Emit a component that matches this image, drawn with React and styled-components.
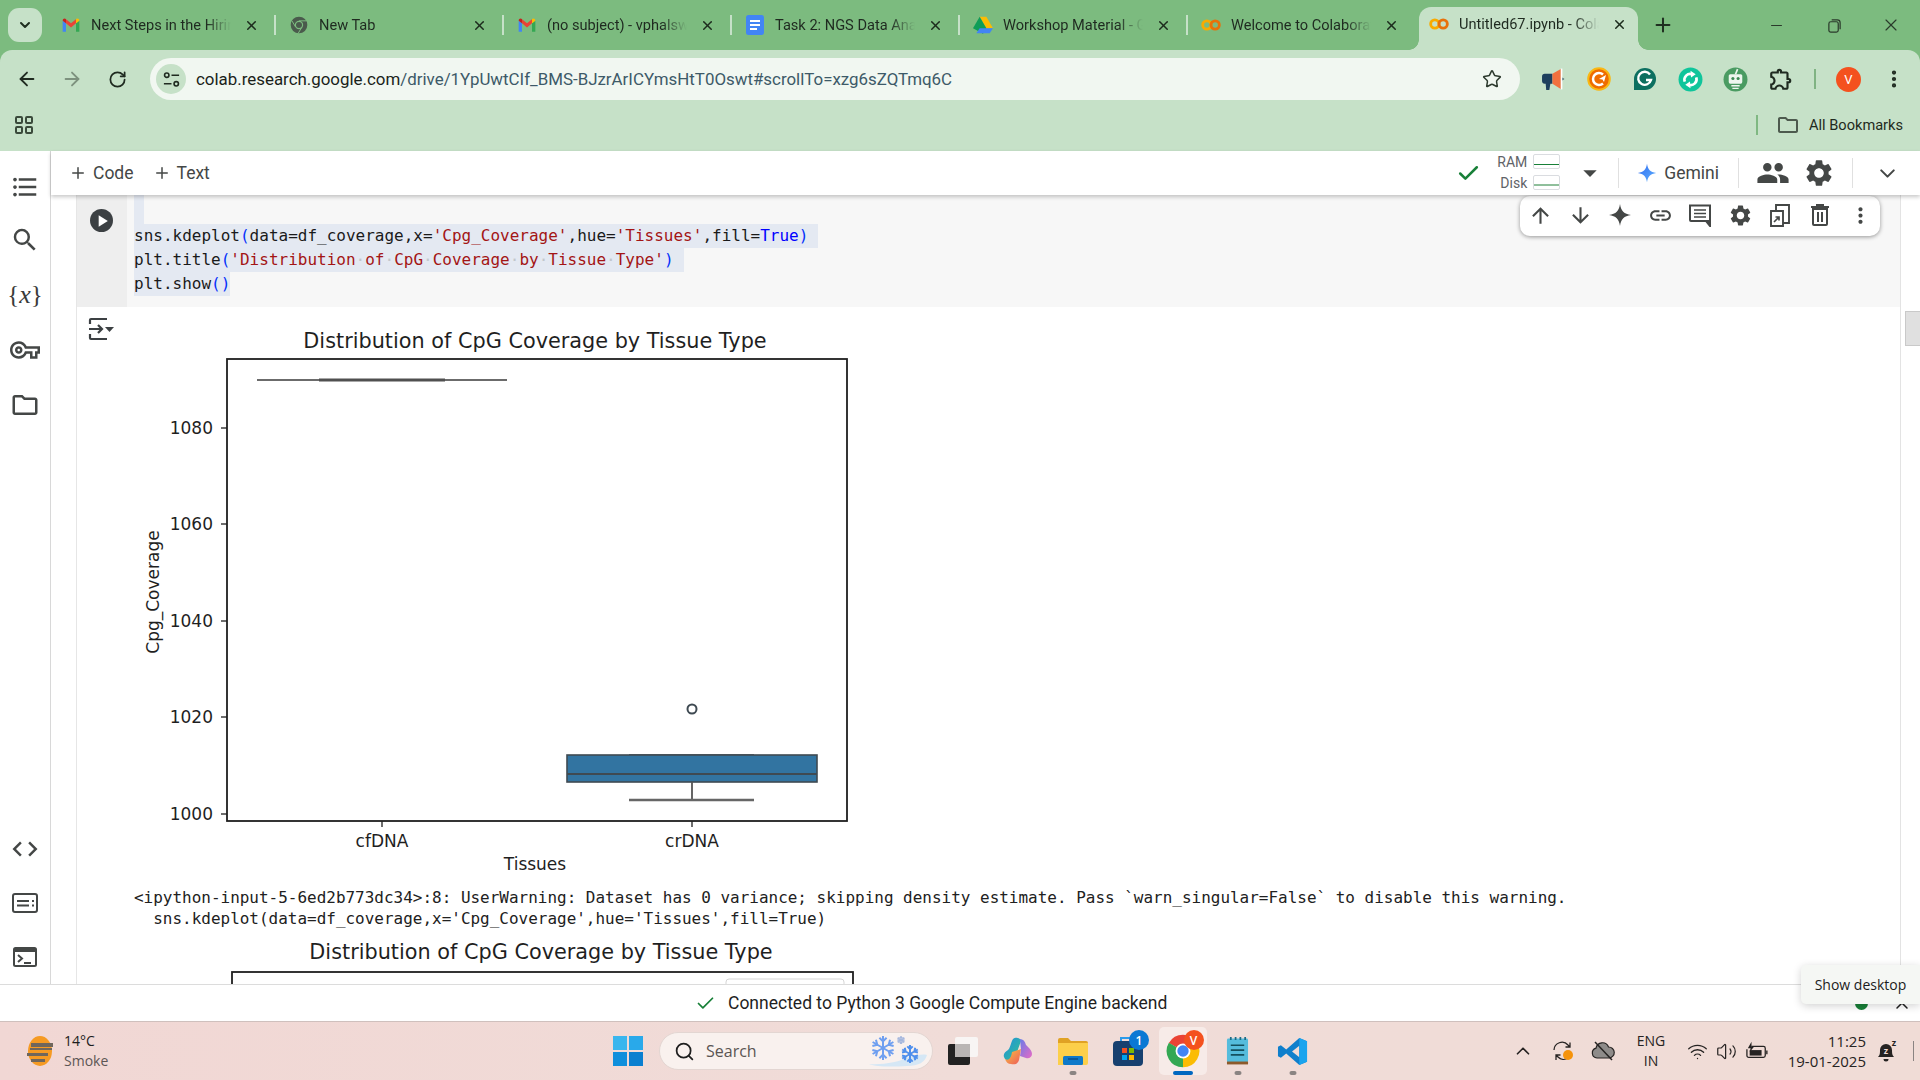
import React from 'react';
import styled, { createGlobalStyle } from 'styled-components';
import { ArrowLeft, ArrowRight, RotateCw, Star, Plus, X, Minus, ChevronDown, ChevronUp, Search, Check, MoreVertical, Wifi, Volume2 } from 'lucide-react';
import {
  MdFormatListBulleted, MdSearch, MdOutlineVpnKey, MdOutlineFolder, MdCode, MdPeople, MdSettings,
  MdArrowUpward, MdArrowDownward, MdLink, MdMoreVert, MdPlayArrow, MdArrowDropDown, MdOutlineExtension,
} from 'react-icons/md';

const UI_FONT = `Roboto, "Liberation Sans", sans-serif`;
const TAB_GREEN = '#7cbb7f';
const BAR_GREEN = '#c6e1c8';

const GlobalStyle = createGlobalStyle`
  html, body { margin: 0; padding: 0; width: 1920px; height: 1080px; overflow: hidden; background: #fff; }
  * { box-sizing: border-box; }
  body { font-family: ${UI_FONT}; color: #1f1f1f; }
`;

const Page = styled.div`
  position: relative;
  width: 1920px;
  height: 1080px;
  display: flex;
  flex-direction: column;
  overflow: hidden;
`;

/* ---- browser chrome ---- */
const Chrome = styled.div`
  background: ${TAB_GREEN};
  flex: none;
`;

const TabStrip = styled.div`
  height: 50px;
  display: flex;
  align-items: flex-end;
  padding-left: 8px;
`;

const TabSearch = styled.div`
  width: 34px;
  height: 34px;
  margin: 0 5px 8px 0;
  border-radius: 11px;
  background: ${BAR_GREEN};
  display: flex;
  align-items: center;
  justify-content: center;
  color: #1f2f20;
`;

const TabItem = styled.div`
  position: relative;
  width: 228px;
  height: 42px;
  padding: 0 16px 8px 14px;
  display: flex;
  align-items: center;
  gap: 10px;
  color: #1f2a20;
  ${(p) => (p.$active ? 'height: 43px; padding-bottom: 9px;' : '')}
`;

const ActiveBack = styled.div`
  position: absolute;
  left: 4px;
  right: 5px;
  top: 0;
  bottom: 0;
  background: ${BAR_GREEN};
  border-radius: 12px 12px 0 0;
`;

const TabFoot = styled.div`
  position: absolute;
  bottom: 0;
  width: 10px;
  height: 10px;
  ${(p) => (p.$side === 'left' ? 'left: -6px;' : 'right: -5px;')}
  background: radial-gradient(circle at ${(p) => (p.$side === 'left' ? '0 0' : '100% 0')}, transparent 9.5px, ${BAR_GREEN} 10px);
`;

const TabSep = styled.div`
  position: absolute;
  right: -1px;
  top: 7px;
  width: 2px;
  height: 20px;
  background: ${BAR_GREEN};
`;

const TabIcon = styled.div`
  position: relative;
  flex: none;
  width: 20px;
  height: 20px;
  display: flex;
`;

const TabTitle = styled.div`
  position: relative;
  flex: 1;
  min-width: 0;
  margin-right: 2px;
  font-size: 14.6px;
  white-space: nowrap;
  overflow: hidden;
  -webkit-mask-image: linear-gradient(90deg, #000 82%, transparent 100%);
  mask-image: linear-gradient(90deg, #000 82%, transparent 100%);
`;

const TabClose = styled.div`
  position: relative;
  flex: none;
  width: 16px;
  height: 16px;
  display: flex;
  align-items: center;
  justify-content: center;
  color: #1c2b1d;
`;

const NewTab = styled.div`
  width: 40px;
  height: 34px;
  margin: 0 0 8px 0;
  display: flex;
  align-items: center;
  justify-content: center;
  color: #1f2f20;
`;

const WinControls = styled.div`
  margin-left: auto;
  display: flex;
  align-self: flex-start;
`;

const WinButton = styled.div`
  width: 57.3px;
  height: 50px;
  display: flex;
  align-items: center;
  justify-content: center;
  color: #2a3a2b;
`;

const Toolbar = styled.div`
  height: 58px;
  padding: 8px 0 8px 4px;
  background: ${BAR_GREEN};
  border-radius: 12px 12px 0 0;
  display: flex;
  align-items: center;
`;

const NavButton = styled.div`
  width: 45.5px;
  height: 42px;
  flex: none;
  display: flex;
  align-items: center;
  justify-content: center;
  color: ${(p) => (p.$disabled ? '#7d917e' : '#1f2a20')};
`;

const Omnibox = styled.div`
  width: 1370px;
  height: 42px;
  margin: 0 11px 0 9.5px;
  padding: 0 18px 0 6px;
  flex: none;
  border-radius: 21px;
  background: #f1f7f1;
  display: flex;
  align-items: center;
  gap: 10px;
`;

const SiteChip = styled.div`
  width: 30px;
  height: 30px;
  flex: none;
  border-radius: 50%;
  background: ${BAR_GREEN};
  display: flex;
  align-items: center;
  justify-content: center;
  color: #1f2a20;
`;

const UrlText = styled.div`
  flex: 1;
  font-size: 16.9px;
  color: #3d5a68;
  white-space: nowrap;
  b { font-weight: 400; color: #1a1f1a; }
`;

const ExtSlot = styled.div`
  width: 45.5px;
  height: 32px;
  flex: none;
  display: flex;
  align-items: center;
  justify-content: center;
`;

const ToolSep = styled.div`
  width: 2px;
  height: 20px;
  margin: 0 ${(p) => p.$gap || 10}px;
  background: #80b383;
  flex: none;
`;

const Avatar = styled.div`
  width: 25px;
  height: 25px;
  margin: 0 10px 0 10px;
  flex: none;
  border-radius: 50%;
  background: #f4511e;
  color: #fff;
  font-size: 13px;
  display: flex;
  align-items: center;
  justify-content: center;
`;

const BookmarkBar = styled.div`
  height: 43px;
  padding: 0 17px 9px 14px;
  background: ${BAR_GREEN};
  display: flex;
  align-items: center;
  color: #1f2a20;
  font-size: 14.6px;
`;

const BookmarkEnd = styled.div`
  margin-left: auto;
  display: flex;
  align-items: center;
  gap: 9px;
`;

const BookmarkDivider = styled.div`
  width: 2px;
  height: 20px;
  margin-right: 9px;
  background: #7fb882;
`;

/* ---- colab ---- */
const Workspace = styled.div`
  height: 833px;
  flex: none;
  display: flex;
`;

const Sidebar = styled.div`
  width: 51px;
  flex: none;
  padding-top: 9.5px;
  border-right: 1px solid #d8d8d8;
  display: flex;
  flex-direction: column;
  align-items: center;
  color: #444746;
  background: #fff;
`;

const SideIcon = styled.div`
  width: 30px;
  height: ${(p) => p.$h || 55}px;
  display: flex;
  align-items: center;
  justify-content: center;
  font-size: 30px;
  ${(p) => (p.$push ? 'margin-top: auto;' : '')}
`;

const VarGlyph = styled.span`
  font-family: "Liberation Serif", serif;
  font-size: 25px;
  white-space: nowrap;
  color: #3a3a3a;
  i { font-size: 26px; }
`;

const Main = styled.div`
  flex: 1;
  min-width: 0;
  display: flex;
  flex-direction: column;
`;

const ColabBar = styled.div`
  position: relative;
  z-index: 2;
  height: 44px;
  flex: none;
  padding: 0 20px 0 18px;
  background: #fff;
  box-shadow: 0 2px 4px rgba(0, 0, 0, 0.22);
  display: flex;
  align-items: center;
  color: #444746;
`;

const AddButton = styled.div`
  display: flex;
  align-items: center;
  gap: 6px;
  margin-right: 19px;
  font-size: 17.5px;
`;

const BarRight = styled.div`
  margin-left: auto;
  display: flex;
  align-items: center;
`;

const Meters = styled.div`
  margin: -2px 0 0 16px;
  display: grid;
  grid-template-columns: auto 27px;
  column-gap: 6px;
  row-gap: 5px;
  align-items: center;
  justify-items: end;
  font-size: 14px;
  color: #5f6368;
`;

const Meter = styled.div`
  width: 27px;
  height: 15px;
  border: 1px solid #dadce0;
  border-radius: 2px;
  background: #fff;
  display: flex;
  flex-direction: column;
  justify-content: flex-end;
  &::after {
    content: '';
    height: ${(p) => p.$level}px;
    background: ${(p) => p.$color};
    margin-bottom: 3px;
  }
`;

const BarSep = styled.div`
  width: 1px;
  height: 30px;
  background: #e0e0e0;
  margin: ${(p) => p.$m || '0 18px'};
`;

const GeminiLabel = styled.div`
  display: flex;
  align-items: center;
  gap: 7px;
  font-size: 17.5px;
`;

const Notebook = styled.div`
  position: relative;
  flex: 1;
  min-height: 0;
  display: flex;
  overflow: hidden;
  background: #fff;
`;

const LeftGutter = styled.div`
  width: 26px;
  flex: none;
  border-right: 1px solid #e6e6e6;
`;

const CellColumn = styled.div`
  flex: 1;
  min-width: 0;
`;

const Cell = styled.div`
  height: 112px;
  display: flex;
`;

const RunGutter = styled.div`
  width: 50px;
  flex: none;
  padding: 14px 0 0 13px;
  background: #eeeeee;
`;

const RunButton = styled.div`
  width: 23px;
  height: 23px;
  border-radius: 50%;
  background: #3c4043;
  color: #fff;
  display: flex;
  align-items: center;
  justify-content: center;
`;

const CodeArea = styled.div`
  flex: 1;
  background: #f7f7f7;
  padding-left: 7px;
  font-family: "DejaVu Sans Mono", "Liberation Mono", monospace;
  font-size: 16px;
  line-height: 24px;
  color: #1a1a1a;
`;

const SelectBlank = styled.div`
  width: 10px;
  height: 29px;
  background: #e4e9f2;
`;

const CodeLine = styled.div`
  white-space: pre;
  height: 24px;
`;

const Selected = styled.span`
  display: inline-block;
  height: 24px;
  padding-right: ${(p) => p.$pad || 0}px;
  background: #e4e9f2;
`;

const Str = styled.span` color: #a31515; `;
const Paren = styled.span` color: #0431fa; `;
const Kw = styled.span` color: #0000ff; `;
const Ws = styled.span` color: #c2c7cc; `;

const OutputRow = styled.div`
  display: flex;
`;

const OutputGutter = styled.div`
  width: 50px;
  flex: none;
  padding: 10px 0 0 11px;
  color: #3c4043;
`;

const OutputBody = styled.div`
  flex: 1;
  min-width: 0;
`;

const ChartSvg = styled.svg`
  display: block;
  overflow: hidden;
`;

const Stderr = styled.pre`
  margin: 10px 0 0;
  padding-left: 7px;
  font-family: "DejaVu Sans Mono", "Liberation Mono", monospace;
  font-size: 15.97px;
  line-height: 21px;
  color: #212121;
  height: 44px;
`;

const Scrollbar = styled.div`
  width: 20px;
  flex: none;
  padding: 116px 0 0 4px;
  border-left: 1px solid #e3e3e3;
`;

const ScrollThumb = styled.div`
  height: 35px;
  background: #e0e0e0;
  border: 1px solid #c9c9c9;
  border-right: 0;
`;

const CellToolbar = styled.div`
  position: absolute;
  left: 1469px;
  top: 1px;
  width: 360px;
  height: 40px;
  padding-bottom: 2px;
  border-radius: 10px;
  background: #fff;
  box-shadow: 0 1px 4px rgba(0, 0, 0, 0.4);
  display: flex;
  align-items: center;
  color: #444746;
`;

const CellTool = styled.div`
  width: 40px;
  height: 38px;
  display: flex;
  align-items: center;
  justify-content: center;
  font-size: 25px;
`;

const StatusBar = styled.div`
  height: 37px;
  flex: none;
  padding: 0 8px 0 695px;
  border-top: 1px solid #dcdcdc;
  background: #fff;
  display: flex;
  align-items: center;
  font-size: 17.5px;
  color: #1f1f1f;
`;

const StatusText = styled.span`
  margin-left: 12px;
`;

const StatusEnd = styled.div`
  margin-left: auto;
  display: flex;
  align-items: center;
  gap: 24px;
`;

const GreenDot = styled.div`
  width: 13px;
  height: 13px;
  border-radius: 50%;
  background: #188038;
`;

const DesktopTip = styled.div`
  position: absolute;
  left: 1801px;
  top: 965px;
  width: 119px;
  height: 39px;
  z-index: 5;
  border-radius: 5px 0 0 5px;
  background: #f5f7f4;
  box-shadow: 0 2px 8px rgba(0, 0, 0, 0.18);
  font-family: "Open Sans", sans-serif;
  font-size: 14px;
  display: flex;
  align-items: center;
  justify-content: center;
  color: #1c1c1c;
`;

/* ---- windows taskbar ---- */
const Taskbar = styled.div`
  height: 59px;
  flex: none;
  border-top: 1px solid #cfc0bd;
  background: linear-gradient(90deg, #f1d7d4 0%, #f0dcd8 50%, #f0dcd6 100%);
  display: flex;
  align-items: center;
  font-family: "Open Sans", sans-serif;
`;

const Weather = styled.div`
  width: 600px;
  flex: none;
  padding-left: 24px;
  display: flex;
  align-items: center;
  gap: 8px;
`;

const WeatherText = styled.div`
  font-size: 14px;
  line-height: 20px;
  color: #1c1c1c;
  span { display: block; color: #5c5654; }
`;

const TaskSlot = styled.div`
  position: relative;
  width: ${(p) => (p.$active ? 48 : 55)}px;
  height: 48px;
  flex: none;
  ${(p) => (p.$active ? 'margin: 0 3.5px; background: #f7ebe8; border-radius: 5px;' : '')}
  display: flex;
  align-items: center;
  justify-content: center;
`;

const RunDot = styled.div`
  position: absolute;
  bottom: 0;
  left: 50%;
  transform: translateX(-50%);
  height: 4px;
  border-radius: 2px;
  width: ${(p) => (p.$active ? 20 : 7)}px;
  background: ${(p) => (p.$active ? '#0067c0' : '#8a8482')};
`;

const Badge = styled.div`
  position: absolute;
  right: ${(p) => p.$r}px;
  top: ${(p) => p.$t}px;
  width: 20px;
  height: 20px;
  border-radius: 50%;
  background: ${(p) => p.$bg};
  color: #fff;
  font-size: 12px;
  font-weight: 600;
  display: flex;
  align-items: center;
  justify-content: center;
`;

const SearchPill = styled.div`
  width: 274px;
  height: 38px;
  margin: 0 2px 0 4px;
  padding: 0 4px 0 14px;
  flex: none;
  border-radius: 19px;
  background: #f9f1ee;
  border: 1px solid #e3d6d2;
  display: flex;
  align-items: center;
  gap: 11px;
  font-size: 16px;
  color: #5b5553;
`;

const SnowBox = styled.div`
  margin-left: auto;
  display: flex;
`;

const Tray = styled.div`
  margin-left: auto;
  padding-right: 6px;
  display: flex;
  align-items: center;
  color: #262322;
`;

const TrayItem = styled.div`
  width: ${(p) => p.$w}px;
  margin-left: ${(p) => p.$ml || 0}px;
  flex: none;
  display: flex;
  align-items: center;
  justify-content: center;
`;

const TrayText = styled.div`
  flex: none;
  font-size: ${(p) => p.$size || 14}px;
  line-height: 20px;
  text-align: ${(p) => p.$align || 'center'};
  width: ${(p) => p.$w}px;
`;

const TrayDivider = styled.div`
  width: 1px;
  height: 20px;
  margin-left: 7px;
  background: #8a8482;
`;

/* ---- drawn icons ---- */
const GmailIcon = () => (
  <svg viewBox="0 0 24 20" width="20" height="20">
    <path d="M2 18V5l4 3v10z" fill="#4285f4" />
    <path d="M22 18V5l-4 3v10z" fill="#34a853" />
    <path d="M6 8V3l6 5 6-5v5l-6 5z" fill="#ea4335" />
    <path d="M2 5c0-2.5 2.5-3.4 4-2v5z" fill="#c5221f" />
    <path d="M22 5c0-2.5-2.5-3.4-4-2v5z" fill="#fbbc04" />
  </svg>
);

const ChromeMono = () => (
  <svg viewBox="0 0 24 24" width="20" height="20">
    <circle cx="12" cy="12" r="10" fill="#4a5a4c" />
    <circle cx="12" cy="12" r="5" fill={TAB_GREEN} />
    <circle cx="12" cy="12" r="3.6" fill="#4a5a4c" />
    <path d="M12 7h9M8 14.5L3.5 7M15.5 14.5L11 22" stroke={TAB_GREEN} strokeWidth="1.2" />
  </svg>
);

const DocsIcon = () => (
  <svg viewBox="0 0 20 20" width="20" height="20">
    <rect x="1" y="0" width="18" height="20" rx="2.5" fill="#4285f4" />
    <path d="M5 6h10M5 10h10M5 14h7" stroke="#fff" strokeWidth="1.8" />
  </svg>
);

const DriveIcon = () => (
  <svg viewBox="0 0 24 22" width="20" height="20">
    <path d="M8 1h8l8 14h-8z" fill="#fbbc04" />
    <path d="M8 1l8 14-4 6.5L0 15z" fill="#0f9d58" />
    <path d="M4 21l4-6h16l-4 6z" fill="#4285f4" />
  </svg>
);

const ColabIcon = () => (
  <svg viewBox="0 0 24 16" width="21" height="20">
    <circle cx="7" cy="8" r="5" fill="none" stroke="#f9ab00" strokeWidth="3.4" />
    <circle cx="17" cy="8" r="5" fill="none" stroke="#e8710a" strokeWidth="3.4" />
  </svg>
);

const ChromeColor = ({ size = 34 }) => (
  <svg viewBox="0 0 48 48" width={size} height={size}>
    <path d="M10.1 16A16 16 0 0 1 37.9 16" fill="none" stroke="#ea4335" strokeWidth="14" />
    <path d="M37.9 16A16 16 0 0 1 24 40" fill="none" stroke="#fbbc04" strokeWidth="14" />
    <path d="M24 40A16 16 0 0 1 10.1 16" fill="none" stroke="#34a853" strokeWidth="14" />
    <circle cx="24" cy="24" r="10.5" fill="#fff" />
    <circle cx="24" cy="24" r="8" fill="#4285f4" />
  </svg>
);

const SiteTune = () => (
  <svg viewBox="0 0 20 20" width="19" height="19" fill="none" stroke="currentColor" strokeWidth="1.7">
    <circle cx="5" cy="5.500" r="2.300" />
    <path d="M10 5.500h8M2 14.500h8" />
    <circle cx="15" cy="14.500" r="2.300" />
  </svg>
);

const Megaphone = () => (
  <svg viewBox="0 0 24 24" width="25" height="25">
    <path d="M1 9c0-1.500 1-2.500 2.500-2.500H11v9.500H9l-1 6H5l-.5-6H3.500C2 16 1 15 1 13.500z" fill="#1d3f5e" />
    <path d="M11 6.500L19 2v19l-8-5z" fill="#f2703f" />
    <path d="M19 1.500h1.500V21.500H19z" fill="#fff" />
    <path d="M20.500 10l2 1.500-2 1.500z" fill="#4d6a78" />
  </svg>
);

const ReplyExt = () => (
  <svg viewBox="0 0 24 24" width="24" height="24">
    <circle cx="12" cy="12" r="10.800" fill="#ef6c00" stroke="#f9b814" strokeWidth="2" />
    <path d="M16 7.500A6 6 0 1 0 16 16.500" fill="none" stroke="#fff" strokeWidth="2.500" />
    <path d="M12 12l7-4-2 7-1.500-2.500z" fill="#fff" />
  </svg>
);

const GrammarExt = () => (
  <svg viewBox="0 0 24 24" width="24" height="24">
    <path d="M12 1a11 11 0 0 1 0 22H1V12A11 11 0 0 1 12 1z" fill="#0c6f60" />
    <path d="M17 7.500A6.500 6.500 0 1 0 18 13h-5" fill="none" stroke="#fff" strokeWidth="2.400" />
  </svg>
);

const ArrowsExt = () => (
  <svg viewBox="0 0 24 24" width="25" height="25">
    <circle cx="12" cy="12" r="11.500" fill="#0fc59b" />
    <path d="M6.500 14a5.500 5.500 0 0 1 7-7M17.500 10a5.500 5.500 0 0 1-7 7" fill="none" stroke="#fff" strokeWidth="2.600" />
    <path d="M12 3.500l5 3.500-4.500 3zM12 20.500L7 17l4.500-3z" fill="#fff" />
  </svg>
);

const RobotExt = () => (
  <svg viewBox="0 0 24 24" width="25" height="25">
    <circle cx="12" cy="12" r="11.500" fill="#4a9b62" />
    <rect x="5.500" y="7" width="13" height="9" rx="1.500" fill="#eef6ef" />
    <circle cx="9.500" cy="11" r="1.500" fill="#3c8a54" />
    <circle cx="14.500" cy="11" r="1.500" fill="#3c8a54" />
    <path d="M12 7l2-5" stroke="#eef6ef" strokeWidth="1.600" />
    <path d="M8 18h8M9 20.500h6" stroke="#eef6ef" strokeWidth="1.400" />
  </svg>
);

const WinLogo = () => (
  <svg viewBox="0 0 30 30" width="30" height="30">
    <path d="M0 0h14v14H0z" fill="#3ab6ee" />
    <path d="M16 0h14v14H16z" fill="#29a9ea" />
    <path d="M0 16h14v14H0z" fill="#0f8fdc" />
    <path d="M16 16h14v14H16z" fill="#0a7fd0" />
  </svg>
);

const WeatherIcon = () => (
  <svg viewBox="0 0 32 32" width="32" height="32">
    <ellipse cx="16" cy="16" rx="12" ry="15" fill="#f59a23" />
    <path d="M7 8h22v4H7zM3 18h21v3H3zM7 24h14v3H7z" fill="#6f665c" />
    <path d="M6 13h22v2H6z" fill="#6f665c" />
  </svg>
);

const Flake = ({ x, y, r, color, width = 2 }) => (
  <g transform={`translate(${x} ${y})`} stroke={color} strokeWidth={width} fill="none">
    {[0, 60, 120, 180, 240, 300].map((a) => (
      <g key={a} transform={`rotate(${a})`}>
        <path d={`M0 0V${-r}M${-r * 0.3} ${-r * 0.85}L0 ${-r * 0.55}L${r * 0.3} ${-r * 0.85}`} />
      </g>
    ))}
  </g>
);

const SnowArt = () => (
  <svg viewBox="0 0 60 32" width="60" height="32">
    <path d="M1 29c14 1 30-2 40-7 8-2 14-3 18-2-2 7-8 11-20 11-16 1-30 1-38-2z" fill="#d5e7f5" />
    <Flake x={15} y={13} r={12} color="#6f9ff0" />
    <Flake x={42} y={19} r={9} color="#4f8fec" />
    <Flake x={33} y={5} r={4} color="#a5b7dd" width={1.500} />
  </svg>
);

const TaskView = () => (
  <svg viewBox="0 0 30 28" width="30" height="28">
    <rect x="7" y="0" width="23" height="20" rx="2" fill="#f8f5f4" />
    <rect x="0" y="7" width="22" height="21" rx="2" fill="#222" />
    <rect x="7" y="7" width="15" height="13" fill="#b9b5b4" />
  </svg>
);

const Copilot = () => (
  <svg viewBox="0 0 30 28" width="30" height="28">
    <defs>
      <linearGradient id="copA" x1="0" y1="0" x2="1" y2="1">
        <stop offset="0" stopColor="#1f8fe0" />
        <stop offset="1" stopColor="#35c28f" />
      </linearGradient>
      <linearGradient id="copB" x1="0" y1="0" x2="1" y2="1">
        <stop offset="0" stopColor="#6a7be8" />
        <stop offset="1" stopColor="#e66bc5" />
      </linearGradient>
      <linearGradient id="copC" x1="0" y1="0" x2="1" y2="1">
        <stop offset="0" stopColor="#f5c542" />
        <stop offset="1" stopColor="#ef5a5a" />
      </linearGradient>
    </defs>
    <path d="M10 2c2-2 7-2 8 2l-4 11-3 8c-3 2-9 1-10-3-1-3 1-5 4-7 2-1 3-8 5-11z" fill="url(#copA)" />
    <path d="M17 2c3 0 5 2 6 6 2 2 6 5 6 9 0 3-3 5-6 4l-6-2 1-6z" fill="url(#copB)" />
    <path d="M9 15l9-3-2 11c-1 4-5 5-8 4-3 0-5-2-6-5 3 2 6 0 7-7z" fill="url(#copC)" />
  </svg>
);

const ExplorerIcon = () => (
  <svg viewBox="0 0 30 27" width="30" height="27">
    <path d="M0 2a2 2 0 0 1 2-2h8l3 3h15a2 2 0 0 1 2 2v3H0z" fill="#e0a224" />
    <path d="M0 5h30v20a2 2 0 0 1-2 2H0z" fill="#fccf4a" />
    <rect x="5" y="18" width="20" height="9" rx="1.500" fill="#0f79c9" />
    <path d="M10 21h10" stroke="#0a4f8a" strokeWidth="1.500" />
  </svg>
);

const StoreIcon = () => (
  <svg viewBox="0 0 30 30" width="30" height="30">
    <path d="M8 6V2h14v4" fill="none" stroke="#2b9bea" strokeWidth="2" />
    <rect x="0" y="5" width="30" height="25" rx="4" fill="#17406f" />
    <path d="M9 12h5v5H9z" fill="#f25022" />
    <path d="M16 12h5v5h-5z" fill="#7fba00" />
    <path d="M9 19h5v5H9z" fill="#00a4ef" />
    <path d="M16 19h5v5h-5z" fill="#ffb900" />
  </svg>
);

const NotepadIcon = () => (
  <svg viewBox="0 0 24 30" width="23" height="30">
    <rect x="1" y="2" width="22" height="25" rx="1.500" fill="#55bcdc" />
    <path d="M1 26h22v3H1z" fill="#8d5a2b" />
    <path d="M5 0.500v3M10 0.500v3M15 0.500v3M20 0.500v3" stroke="#1c6c86" strokeWidth="1.800" />
    <path d="M5 9h14M5 14h14M5 19h14" stroke="#14505f" strokeWidth="1.800" />
  </svg>
);

const VsCode = () => (
  <svg viewBox="0 0 32 32" width="31" height="31">
    <path fillRule="evenodd" d="M23 2L31 5.500V26.500L23 30L9.500 18L4 22.500L1 21V11L4 9.500L9.500 14ZM23 10L15.500 16L23 22Z" fill="#0f7fcc" />
    <path d="M23 2L31 5.500V26.500L23 30Z" fill="#1ba4ee" />
  </svg>
);

const SparkIcon = ({ size = 22, color = 'currentColor' }) => (
  <svg viewBox="0 0 24 24" width={size} height={size}>
    <path d="M12 1c1 7 4 10 11 11-7 1-10 4-11 11-1-7-4-10-11-11 7-1 10-4 11-11z" fill={color} />
  </svg>
);

const GeminiStar = () => (
  <svg viewBox="0 0 24 24" width="20" height="20">
    <defs>
      <linearGradient id="geminiFill" x1="0" y1="0" x2="1" y2="1">
        <stop offset="0" stopColor="#2f6bf0" />
        <stop offset="1" stopColor="#5fb2ff" />
      </linearGradient>
    </defs>
    <path d="M12 1c1 7 4 10 11 11-7 1-10 4-11 11-1-7-4-10-11-11 7-1 10-4 11-11z" fill="url(#geminiFill)" />
  </svg>
);

const CommentIcon = () => (
  <svg viewBox="0 0 24 24" width="24" height="24" fill="none" stroke="currentColor" strokeWidth="2">
    <path d="M2 2.500h20v15.500H3a1 1 0 0 1-1-1z" />
    <path d="M22 18v5l-4-5z" fill="currentColor" />
    <path d="M6 7h12M6 10.500h12M6 14h12" strokeWidth="1.700" />
  </svg>
);

const MirrorIcon = () => (
  <svg viewBox="0 0 24 24" width="24" height="24" fill="none" stroke="currentColor" strokeWidth="1.900">
    <path d="M8 8V2h13v18h-6" />
    <path d="M3 8h12v15H3z" />
    <path d="M6 19l4.500-4.500M7.500 14h3.500v3.500" strokeWidth="1.700" />
  </svg>
);

const TrashIcon = () => (
  <svg viewBox="0 0 24 24" width="24" height="24" fill="none" stroke="currentColor" strokeWidth="2">
    <path d="M5 6h14v15a1 1 0 0 1-1 1H6a1 1 0 0 1-1-1z" />
    <path d="M3 4h18M8 2h8M10 9v10M14 9v10" />
  </svg>
);

const OutputIcon = () => (
  <svg viewBox="0 0 28 24" width="28" height="24" fill="none" stroke="currentColor" strokeWidth="2.200">
    <path d="M2 7V3a1 1 0 0 1 1-1h16M2 17v4a1 1 0 0 0 1 1h16" />
    <path d="M1 12h13M10 8l4 4-4 4" />
    <path d="M17 10h9l-4.500 5z" fill="currentColor" stroke="none" />
  </svg>
);

const PaletteIcon = () => (
  <svg viewBox="0 0 26 20" width="26" height="20" fill="none" stroke="currentColor" strokeWidth="2">
    <rect x="1" y="1" width="24" height="18" rx="2" />
    <path d="M5 8h12M5 12.500h12M20 8h2M20 12.500h2" />
  </svg>
);

const TerminalIcon = () => (
  <svg viewBox="0 0 24 20" width="24" height="20" fill="none">
    <rect x="1" y="1" width="22" height="18" rx="1.500" stroke="currentColor" strokeWidth="2" />
    <path d="M1 1h22v4H1z" fill="currentColor" />
    <path d="M5 8l4 3.500L5 15M11 16h7" stroke="currentColor" strokeWidth="2" />
  </svg>
);

const SyncIcon = () => (
  <svg viewBox="0 0 24 24" width="24" height="24" fill="none" stroke="#262322" strokeWidth="1.300">
    <path d="M3 11a8 8 0 0 1 14-5l2 2M19 3.500V8h-4.500" />
    <path d="M17 19a8 8 0 0 1-10-1l-2-2M5 21v-5h4.500" />
    <circle cx="17" cy="16" r="5" fill="#f5930b" stroke="none" />
  </svg>
);

const CloudSlash = () => (
  <svg viewBox="0 0 24 24" width="24" height="24" fill="none">
    <path d="M6 19a5 5 0 0 1-1-9.800A6.500 6.500 0 0 1 17.500 8 5.500 5.500 0 0 1 18 19z" fill="#8e8b89" stroke="#262322" strokeWidth="1.200" />
    <path d="M4 3l17 18" stroke="#262322" strokeWidth="1.500" />
  </svg>
);

const BatteryIcon = () => (
  <svg viewBox="0 0 24 20" width="22" height="20" fill="none">
    <path d="M6 5h13a2 2 0 0 1 2 2v8a2 2 0 0 1-2 2H3a2 2 0 0 1-2-2V8" stroke="#262322" strokeWidth="1.400" />
    <path d="M4 9h13v6H4z" fill="#262322" />
    <path d="M22 9.500h1.500v4H22z" fill="#262322" />
    <path d="M6 0L2 7h3l-1 4 5-6H6z" fill="#262322" />
  </svg>
);

const SleepBell = () => (
  <svg viewBox="0 0 24 24" width="24" height="24">
    <path d="M4 18c2-2 2-4 2-7a6 6 0 0 1 12 0c0 3 0 5 2 7z" fill="#262322" />
    <path d="M9.500 20h5a2.500 2.500 0 0 1-5 0z" fill="#262322" />
    <text x="12" y="15" textAnchor="middle" fontSize="9" fontWeight="700" fontFamily="Open Sans, sans-serif" fill="#f0dcd6">z</text>
    <text x="20" y="7" textAnchor="middle" fontSize="9" fontWeight="700" fontFamily="Open Sans, sans-serif" fill="#262322">z</text>
  </svg>
);

/* ---- matplotlib figures, coordinates are page pixels ---- */
const INK = '#1f1f1f';
const BOX_EDGE = '#3f4a52';
const yTicks = [['1080', 428], ['1060', 524], ['1040', 621], ['1020', 717], ['1000', 814]];

const Txt = styled.text`
  font-family: "DejaVu Sans", sans-serif;
  font-size: ${(p) => p.$size || 17}px;
  fill: ${INK};
`;

const CoverageChart = () => (
  <ChartSvg width="780" height="570" viewBox="127 307 780 570">
    <Txt x="535" y="348" textAnchor="middle" $size={20.800}>Distribution of CpG Coverage by Tissue Type</Txt>
    <rect x="227" y="359" width="620" height="462" fill="#fff" stroke={INK} strokeWidth="1.800" />
    {yTicks.map(([label, y]) => (
      <g key={label}>
        <path d={`M221 ${y}h6`} stroke={INK} strokeWidth="1.300" />
        <Txt x="213" y={y + 6} textAnchor="end">{label}</Txt>
      </g>
    ))}
    <path d="M382 821v6M692 821v6" stroke={INK} strokeWidth="1.300" />
    <Txt x="382" y="847" textAnchor="middle">cfDNA</Txt>
    <Txt x="692" y="847" textAnchor="middle">crDNA</Txt>
    <Txt x="535" y="870" textAnchor="middle">Tissues</Txt>
    <Txt x="0" y="0" textAnchor="middle" transform="translate(159 592) rotate(-90)">Cpg_Coverage</Txt>
    <path d="M257 380H507" stroke="#6b6b6b" strokeWidth="2" />
    <path d="M319 380H445" stroke="#505050" strokeWidth="2.800" />
    <path d="M629 755H754" stroke={BOX_EDGE} strokeWidth="1.600" />
    <rect x="567" y="755" width="250" height="27" fill="#3274a1" stroke={BOX_EDGE} strokeWidth="1.600" />
    <path d="M567 774H817" stroke={BOX_EDGE} strokeWidth="2" />
    <path d="M692 782V800" stroke="#555" strokeWidth="1.800" />
    <path d="M629 800H754" stroke="#666" strokeWidth="2.400" />
    <circle cx="692" cy="709" r="4.500" fill="none" stroke={BOX_EDGE} strokeWidth="2" />
  </ChartSvg>
);

const SecondChart = () => (
  <ChartSvg width="780" height="60" viewBox="127 931 780 60">
    <Txt x="541" y="959" textAnchor="middle" $size={20.800}>Distribution of CpG Coverage by Tissue Type</Txt>
    <rect x="232" y="972" width="621" height="60" fill="#fff" stroke={INK} strokeWidth="1.800" />
    <rect x="726" y="979" width="118" height="40" rx="3" fill="#fff" stroke="#d5d5d5" />
  </ChartSvg>
);

const tabs = [
  { title: 'Next Steps in the Hiring Process', icon: <GmailIcon /> },
  { title: 'New Tab', icon: <ChromeMono />, plain: true },
  { title: '(no subject) - vphalswal@gmail', icon: <GmailIcon /> },
  { title: 'Task 2: NGS Data Analysis', icon: <DocsIcon /> },
  { title: 'Workshop Material - Google', icon: <DriveIcon /> },
  { title: 'Welcome to Colaboratory', icon: <ColabIcon />, last: true },
  { title: 'Untitled67.ipynb - Colab', icon: <ColabIcon />, active: true },
];

function BrowserChrome() {
  return (
    <Chrome>
      <TabStrip>
        <TabSearch><ChevronDown size={16} strokeWidth={3} /></TabSearch>
        {tabs.map((t) => (
          <TabItem key={t.title} $active={t.active}>
            {t.active && <ActiveBack />}
            {t.active && <TabFoot $side="left" />}
            {t.active && <TabFoot $side="right" />}
            <TabIcon>{t.icon}</TabIcon>
            <TabTitle>{t.title}</TabTitle>
            <TabClose><X size={15} strokeWidth={2.400} /></TabClose>
            {!t.active && !t.last && <TabSep />}
          </TabItem>
        ))}
        <NewTab><Plus size={22} strokeWidth={2.200} /></NewTab>
        <WinControls>
          <WinButton><Minus size={17} strokeWidth={1.500} /></WinButton>
          <WinButton>
            <svg viewBox="0 0 16 16" width="15" height="15" fill="none" stroke="currentColor" strokeWidth="1.300">
              <rect x="2" y="4" width="10" height="11" rx="2" />
              <path d="M5 2h6a3 3 0 0 1 3 3v7" />
            </svg>
          </WinButton>
          <WinButton><X size={20} strokeWidth={1.400} /></WinButton>
        </WinControls>
      </TabStrip>
      <Toolbar>
        <NavButton><ArrowLeft size={22} strokeWidth={2} /></NavButton>
        <NavButton $disabled><ArrowRight size={22} strokeWidth={2} /></NavButton>
        <NavButton><RotateCw size={19} strokeWidth={2.200} /></NavButton>
        <Omnibox>
          <SiteChip><SiteTune /></SiteChip>
          <UrlText><b>colab.research.google.com</b>/drive/1YpUwtCIf_BMS-BJzrArICYmsHtT0Oswt#scrollTo=xzg6sZQTmq6C</UrlText>
          <Star size={20} strokeWidth={1.800} color="#2d3a2e" />
        </Omnibox>
        <ExtSlot><Megaphone /></ExtSlot>
        <ExtSlot><ReplyExt /></ExtSlot>
        <ExtSlot><GrammarExt /></ExtSlot>
        <ExtSlot><ArrowsExt /></ExtSlot>
        <ExtSlot><RobotExt /></ExtSlot>
        <ExtSlot><MdOutlineExtension size={26} color="#1f2a20" /></ExtSlot>
        <ToolSep $gap={10} />
        <Avatar>V</Avatar>
        <NavButton><MoreVertical size={22} strokeWidth={2.600} /></NavButton>
      </Toolbar>
      <BookmarkBar>
        <svg viewBox="0 0 20 20" width="20" height="20" fill="none" stroke="#3a4a3b" strokeWidth="2">
          <rect x="2" y="2" width="6" height="6" rx="1" />
          <rect x="12" y="2" width="6" height="6" rx="1" />
          <rect x="2" y="12" width="6" height="6" rx="1" />
          <rect x="12" y="12" width="6" height="6" rx="1" />
        </svg>
        <BookmarkEnd>
          <BookmarkDivider />
          <MdOutlineFolder size={24} color="#4d5a4e" />
          <span>All Bookmarks</span>
        </BookmarkEnd>
      </BookmarkBar>
    </Chrome>
  );
}

function ColabToolbar() {
  return (
    <ColabBar>
      <AddButton><Plus size={18} strokeWidth={2} />Code</AddButton>
      <AddButton><Plus size={18} strokeWidth={2} />Text</AddButton>
      <BarRight>
        <Check size={25} color="#188038" strokeWidth={2.400} />
        <Meters>
          RAM<Meter $level={1} $color="#188038" />
          Disk<Meter $level={2} $color="#8fbf9b" />
        </Meters>
        <MdArrowDropDown size={32} color="#444746" style={{ margin: '0 0 0 14px' }} />
        <BarSep $m="0 18px 0 12px" />
        <GeminiLabel>
          <GeminiStar />
          Gemini
        </GeminiLabel>
        <BarSep $m="0 17px 0 19px" />
        <MdPeople size={34} />
        <MdSettings size={32} style={{ marginLeft: 13 }} />
        <BarSep $m="0 22px 0 17px" />
        <ChevronDown size={25} strokeWidth={2} />
      </BarRight>
    </ColabBar>
  );
}

function CodeCell() {
  return (
    <Cell>
      <RunGutter>
        <RunButton><MdPlayArrow size={20} /></RunButton>
      </RunGutter>
      <CodeArea>
        <SelectBlank />
        <CodeLine>
          <Selected $pad={10}>sns.kdeplot<Paren>(</Paren>data=df_coverage,x=<Str>'Cpg_Coverage'</Str>,hue=<Str>'Tissues'</Str>,fill=<Kw>True</Kw><Paren>)</Paren></Selected>
        </CodeLine>
        <CodeLine>
          <Selected $pad={10}>plt.title<Paren>(</Paren><Str>'Distribution<Ws>·</Ws>of<Ws>·</Ws>CpG<Ws>·</Ws>Coverage<Ws>·</Ws>by<Ws>·</Ws>Tissue<Ws>·</Ws>Type'</Str><Paren>)</Paren></Selected>
        </CodeLine>
        <CodeLine>
          <Selected>plt.show<Paren>()</Paren></Selected>
        </CodeLine>
      </CodeArea>
    </Cell>
  );
}

const warning = `<ipython-input-5-6ed2b773dc34>:8: UserWarning: Dataset has 0 variance; skipping density estimate. Pass \`warn_singular=False\` to disable this warning.
  sns.kdeplot(data=df_coverage,x='Cpg_Coverage',hue='Tissues',fill=True)`;

const cellTools = [
  <MdArrowUpward key="up" />,
  <MdArrowDownward key="down" />,
  <SparkIcon key="spark" size={24} />,
  <MdLink key="link" />,
  <CommentIcon key="comment" />,
  <MdSettings key="settings" />,
  <MirrorIcon key="mirror" />,
  <TrashIcon key="delete" />,
  <MdMoreVert key="more" />,
];

export default function App() {
  return (
    <Page>
      <GlobalStyle />
      <BrowserChrome />
      <Workspace>
        <Sidebar>
          <SideIcon $h={52}><MdFormatListBulleted /></SideIcon>
          <SideIcon><MdSearch /></SideIcon>
          <SideIcon><VarGlyph>{'{'}<i>x</i>{'}'}</VarGlyph></SideIcon>
          <SideIcon><MdOutlineVpnKey /></SideIcon>
          <SideIcon><MdOutlineFolder /></SideIcon>
          <SideIcon $push><MdCode /></SideIcon>
          <SideIcon $h={53}><PaletteIcon /></SideIcon>
          <SideIcon><TerminalIcon /></SideIcon>
        </Sidebar>
        <Main>
          <ColabToolbar />
          <Notebook>
            <LeftGutter />
            <CellColumn>
              <CodeCell />
              <OutputRow>
                <OutputGutter><OutputIcon /></OutputGutter>
                <OutputBody>
                  <CoverageChart />
                  <Stderr>{warning}</Stderr>
                  <SecondChart />
                </OutputBody>
              </OutputRow>
            </CellColumn>
            <Scrollbar><ScrollThumb /></Scrollbar>
            <CellToolbar>
              {cellTools.map((icon) => <CellTool key={icon.key}>{icon}</CellTool>)}
            </CellToolbar>
          </Notebook>
        </Main>
      </Workspace>
      <StatusBar>
        <Check size={21} color="#188038" strokeWidth={2} />
        <StatusText>Connected to Python 3 Google Compute Engine backend</StatusText>
        <StatusEnd>
          <GreenDot />
          <X size={20} strokeWidth={1.800} />
        </StatusEnd>
      </StatusBar>
      <DesktopTip>Show desktop</DesktopTip>
      <Taskbar>
        <Weather>
          <WeatherIcon />
          <WeatherText>14°C<span>Smoke</span></WeatherText>
        </Weather>
        <TaskSlot><WinLogo /></TaskSlot>
        <SearchPill>
          <Search size={21} color="#1f1f1f" strokeWidth={2} />
          <span>Search</span>
          <SnowBox><SnowArt /></SnowBox>
        </SearchPill>
        <TaskSlot><TaskView /></TaskSlot>
        <TaskSlot><Copilot /></TaskSlot>
        <TaskSlot><ExplorerIcon /><RunDot /></TaskSlot>
        <TaskSlot><StoreIcon /><Badge $r={6} $t={3} $bg="#0a78d4">1</Badge></TaskSlot>
        <TaskSlot $active><ChromeColor /><Badge $r={3} $t={3} $bg="#f4511e">V</Badge><RunDot $active /></TaskSlot>
        <TaskSlot><NotepadIcon /><RunDot /></TaskSlot>
        <TaskSlot><VsCode /><RunDot /></TaskSlot>
        <Tray>
          <TrayItem $w={40}><ChevronUp size={22} strokeWidth={1.800} /></TrayItem>
          <TrayItem $w={40}><SyncIcon /></TrayItem>
          <TrayItem $w={40}><CloudSlash /></TrayItem>
          <TrayText $w={56}>ENG<br />IN</TrayText>
          <TrayItem $w={29} $ml={4}><Wifi size={21} strokeWidth={1.500} /></TrayItem>
          <TrayItem $w={29}><Volume2 size={21} strokeWidth={1.400} /></TrayItem>
          <TrayItem $w={31}><BatteryIcon /></TrayItem>
          <TrayText $w={94} $align="right" $size={15}>11:25<br />19-01-2025</TrayText>
          <TrayItem $w={40}><SleepBell /></TrayItem>
          <TrayDivider />
        </Tray>
      </Taskbar>
    </Page>
  );
}
